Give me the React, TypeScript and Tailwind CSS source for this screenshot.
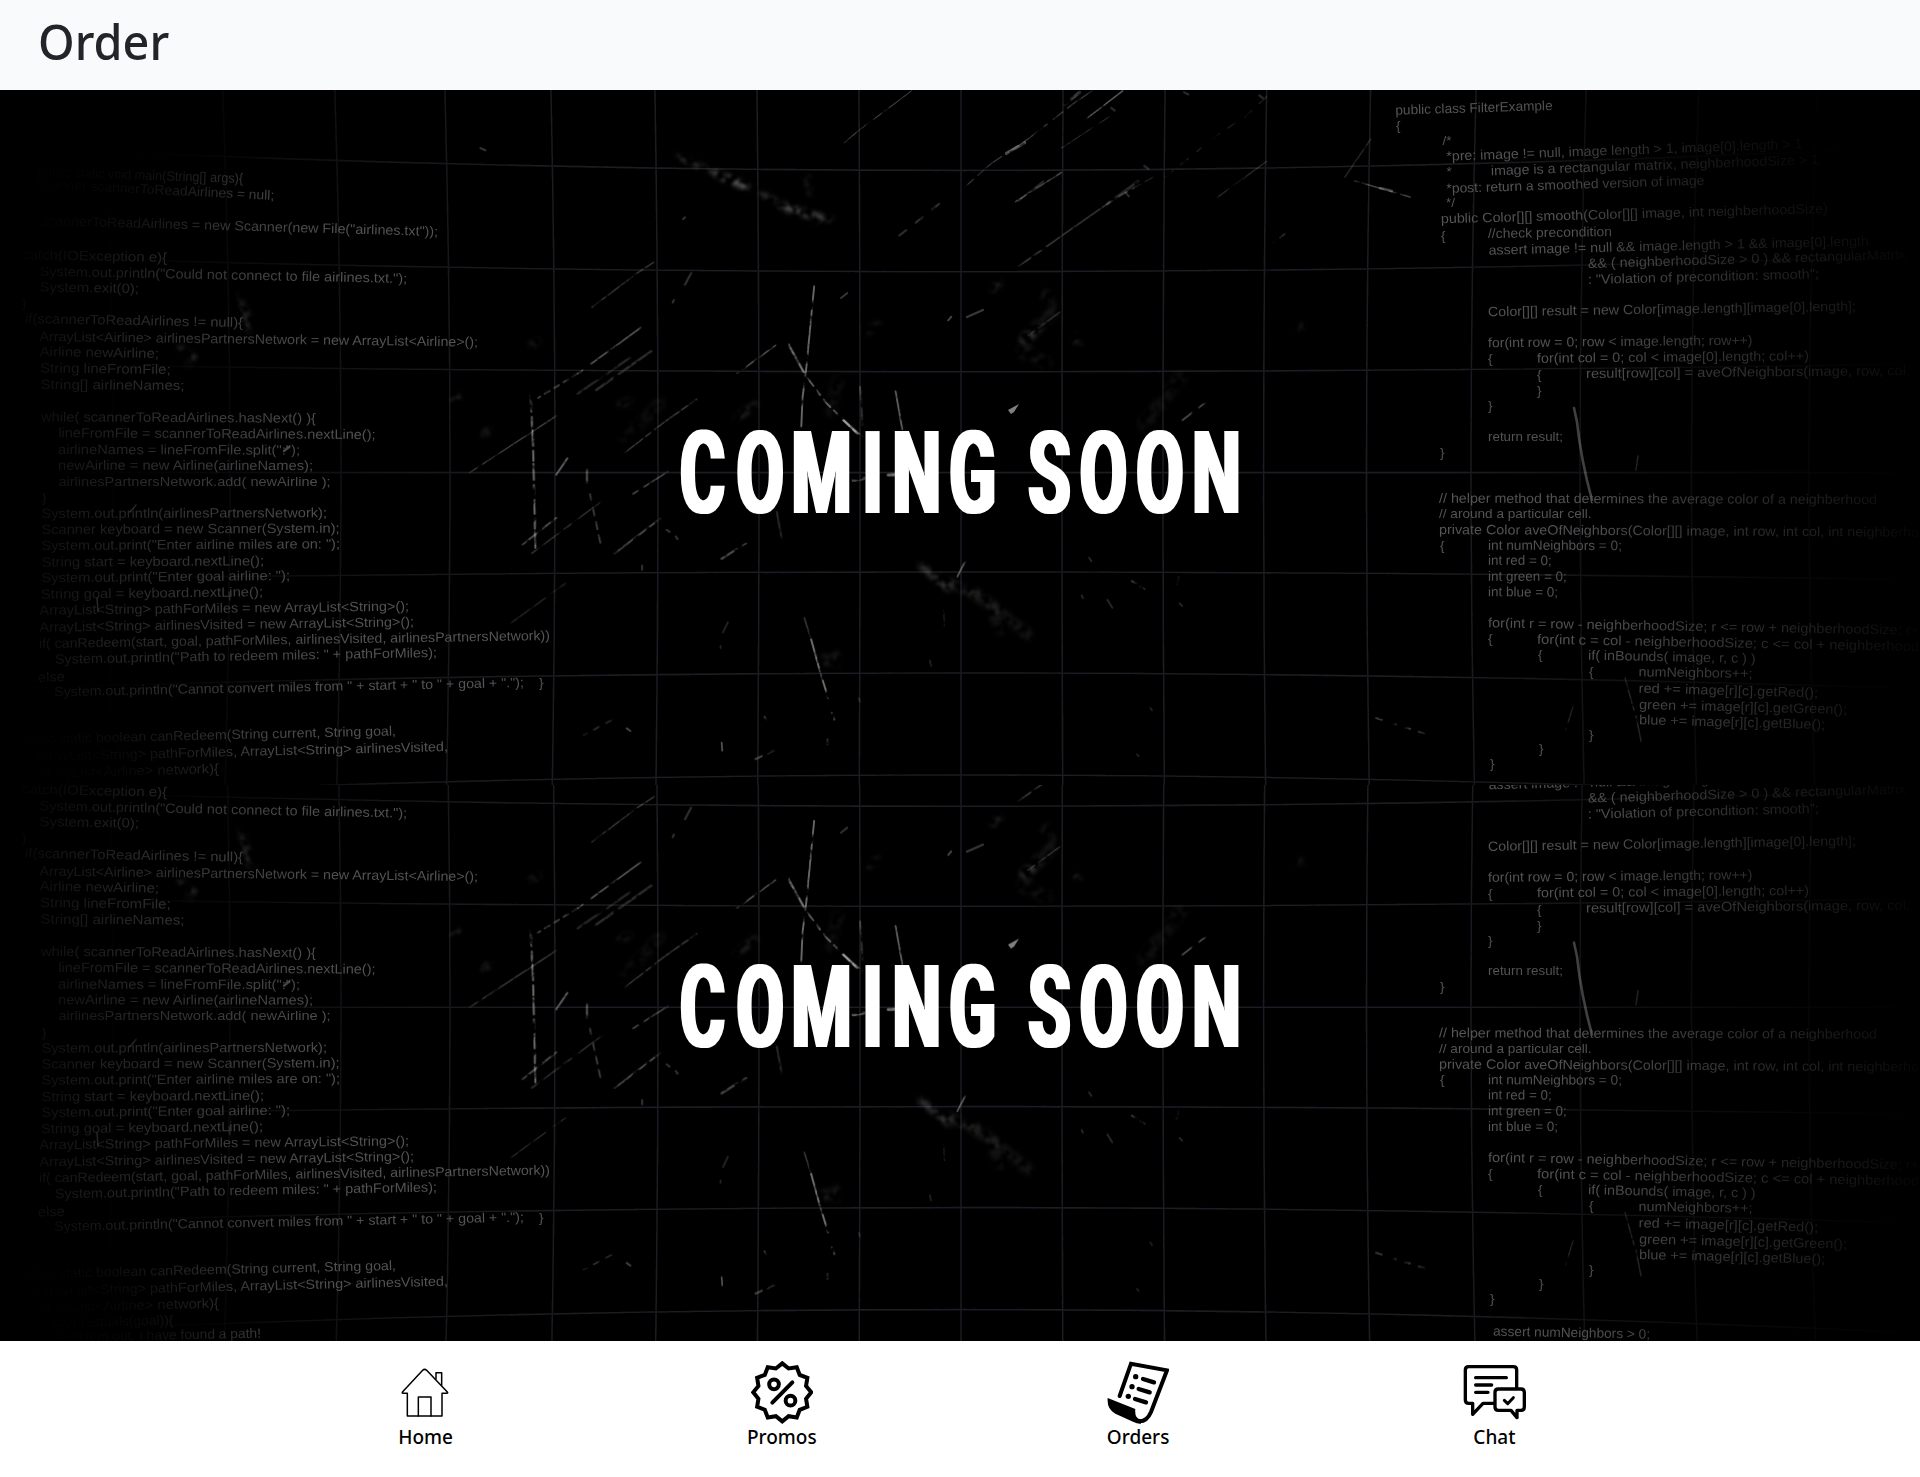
import React from "react";

// [text, start x, baseline y at start, end x, baseline y at end]
type CodeLine = [string, number, number, number?, number?];

const LEFT_CODE: CodeLine[] = [
  ["public static void main(String[] args){", 38, 176, 243, 183],
  ["Scanner scannerToReadAirlines = null;", 35, 188, 274, 200],
  ['scannerToReadAirlines = new Scanner(new File("airlines.txt"));', 41, 225, 438, 236],
  ["catch(IOException e){", 22, 259, 167, 262],
  ['System.out.println("Could not connect to file airlines.txt.");', 39.6, 275.7, 407, 283],
  ["System.exit(0);", 39.6, 291.5, 139, 293],
  ["}", 22, 307],
  ["if(scannerToReadAirlines != null){", 25, 323, 243, 327],
  ["ArrayList<Airline> airlinesPartnersNetwork = new ArrayList<Airline>();", 39.6, 341, 478, 346.5],
  ["Airline newAirline;", 39.6, 356, 159, 358],
  ["String lineFromFile;", 40, 372.5, 170.6, 374],
  ["String[] airlineNames;", 40.5, 389, 184.5, 390],
  ["while( scannerToReadAirlines.hasNext() ){", 41, 421.3, 316, 422.7],
  ["lineFromFile = scannerToReadAirlines.nextLine();", 58.4, 437.3, 375.5, 439],
  ['airlineNames = lineFromFile.split(":");', 58, 454, 300, 454.5],
  ["newAirline = new Airline(airlineNames);", 58, 469.7, 313, 470],
  ["airlinesPartnersNetwork.add( newAirline );", 58.4, 485.7, 330.6, 485.7],
  ["}", 42, 502],
  ["System.out.println(airlinesPartnersNetwork);", 41.6, 518, 327, 517.3],
  ["Scanner keyboard = new Scanner(System.in);", 41.6, 534, 339.6, 532.7],
  ['System.out.print("Enter airline miles are on: ");', 41.6, 550, 340, 548.3],
  ["String start = keyboard.nextLine();", 41.6, 566.7, 264, 565.3],
  ['System.out.print("Enter goal airline: ");', 41.6, 582.3, 290, 580],
  ["String goal = keyboard.nextLine();", 41, 598.7, 263, 596.3],
  ["ArrayList<String> pathForMiles = new ArrayList<String>();", 39.6, 614.7, 409, 610.7],
  ["ArrayList<String> airlinesVisited = new ArrayList<String>();", 39.6, 631.7, 414, 626.3],
  ["if( canRedeem(start, goal, pathForMiles, airlinesVisited, airlinesPartnersNetwork))", 39, 648, 550, 640],
  ['System.out.println("Path to redeem miles: " + pathForMiles);', 55, 663.7, 437, 657],
  ["else", 38, 682, 65, 681],
  ['System.out.println("Cannot convert miles from " + start + " to " + goal + ".");', 54.3, 696.3, 524, 687],
  ["}", 539, 687],
  ["public static boolean canRedeem(String current, String goal,", 18, 744, 396, 735.3],
  ["ArrayList<String> pathForMiles, ArrayList<String> airlinesVisited,", 35, 761, 448, 751],
  ["ArrayList<Airline> network){", 37, 778, 219, 773],
  ["if(current.equals(goal)){", 30, 793, 173.5, 790],
  ["//System.out. I have found a path!", 55, 807, 261, 803],
];

const RIGHT_CODE: CodeLine[] = [
  ["public class FilterExample", 1395.5, 114.7, 1552.7, 110],
  ["{", 1396, 130],
  ["/*", 1442.5, 145],
  ["*pre: image != null, image length > 1, image[0].length > 1", 1446.5, 160.7, 1802.5, 148.3],
  ["*", 1446.5, 176],
  ["image is a rectangular matrix, neighberhoodSize > 1", 1491, 175.3, 1819, 164],
  ["*post: return a smoothed version of image", 1446.5, 193, 1704.4, 184.7],
  ["*/", 1446, 207],
  ["public Color[][] smooth(Color[][] image, int neighberhoodSize)", 1441, 223.3, 1828, 213],
  ["{", 1441, 239.7],
  ["//check precondition", 1488, 238, 1612, 236],
  ["assert image != null && image.length > 1 && image[0].length", 1488.7, 254.7, 1869, 245.3],
  ["&& ( neighberhoodSize > 0 ) && rectangularMatrix", 1588, 268, 1906, 259],
  [': "Violation of precondition: smooth";', 1588, 284, 1819, 278.3],
  ["Color[][] result = new Color[image.length][image[0].length];", 1488, 316.3, 1856, 310.7],
  ["for(int row = 0; row < image.length; row++)", 1488, 347.3, 1752.5, 344.7],
  ["{", 1488, 363],
  ["for(int col = 0; col < image[0].length; col++)", 1537, 362.7, 1809, 360.3],
  ["{", 1537, 379],
  ["result[row][col] = aveOfNeighbors(image, row, col,", 1586, 378, 1910, 375],
  ["}", 1537, 395],
  ["}", 1488, 410],
  ["return result;", 1488, 440.7, 1563, 440.7],
  ["}", 1440, 456.7],
  ["// helper method that determines the average color of a neighberhood", 1439, 502.7, 1877, 504],
  ["// around a particular cell.", 1439, 518, 1591.6, 518],
  ["private Color aveOfNeighbors(Color[][] image, int row, int col, int neighberho", 1439, 534, 1919, 536.7],
  ["{", 1440, 549.7],
  ["int numNeighbors = 0;", 1488, 549.7, 1622, 550],
  ["int red = 0;", 1488, 564.7, 1551.6, 565],
  ["int green = 0;", 1488, 580.7, 1566.8, 581],
  ["int blue = 0;", 1488, 596.3, 1558, 596.5],
  ["for(int r = row - neighberhoodSize; r <= row + neighberhoodSize; r+", 1488, 627.3, 1919, 634.7],
  ["{", 1488, 643],
  ["for(int c = col - neighberhoodSize; c <= col + neighberhood", 1537, 643.7, 1919, 651],
  ["{", 1538, 659],
  ["if( inBounds( image, r, c ) )", 1588, 659.7, 1755.5, 663],
  ["{", 1589, 675.7],
  ["numNeighbors++;", 1638.6, 676.3, 1752.5, 678],
  ["red += image[r][c].getRed();", 1638.6, 692.7, 1818, 697.3],
  ["green += image[r][c].getGreen();", 1639, 709, 1847, 714],
  ["blue += image[r][c].getBlue();", 1639, 724.3, 1825, 729],
  ["}", 1589, 739.3],
  ["}", 1539, 753],
  ["}", 1490, 768],
  ["assert numNeighbors > 0;", 1493, 801, 1650, 804],
];

const GRID_X = [113, 230, 341, 450, 555, 658, 759, 860, 961, 1062, 1163, 1263.6, 1366.5, 1471, 1580, 1691.5, 1809];
const GRID_Y = [170.4, 271.7, 371.7, 472.6, 572, 673, 775];

// [path, brightness 0..1, stroke width, dash pattern]
type Mark = [string, number, number, string?];

const SCRATCHES: Mark[] = [
  ["M770 2L683 92L660 118", 0.24, 1.2],
  ["M1065 2L1035 30L960 110L900 165L855 220", 0.2, 1.4, "30 6 12 8"],
  ["M1115 2L1052 68", 0.34, 1.5],
  ["M1045 5L1020 32", 0.25, 3],
  ["M955 118L925 142", 0.3, 3],
  ["M1095 58L1015 130", 0.15, 1.2],
  ["M1015 185L940 250", 0.25, 1.7],
  ["M985 205L945 248", 0.16, 2],
  ["M1165 195L1100 245", 0.18, 1.5, "9 6"],
  ["M1100 245L1020 322L945 395", 0.27, 1.3],
  ["M1140 205L1090 255", 0.16, 3],
  ["M1350 15L1315 60L1270 100L1180 200", 0.12, 1.3, "10 10"],
  ["M1350 160L1270 240", 0.14, 1.5],
  ["M815 255L765 310L735 342", 0.2, 2, "9 12"],
  ["M350 385L320 412L248 487", 0.26, 1.3],
  ["M328 532L225 635", 0.36, 1.6],
  ["M225 635L160 690", 0.26, 1.8, "6 5"],
  ["M345 585L255 672", 0.18, 2.4],
  ["M310 600L225 680", 0.15, 2.4],
  ["M190 730L45 860", 0.25, 1.3],
  ["M410 410L400 436", 0.2, 2],
  ["M611 440L604 540L598 625L592 690L590 755", 0.4, 1.9],
  ["M548 572L485 635", 0.36, 1.5],
  ["M569 570L594 632", 0.45, 2.2],
  ["M600 645L630 700L683 772", 0.36, 2, "10 5 6 6"],
  ["M655 735L688 776", 0.42, 2.4],
  ["M744 675L755 760", 0.38, 1.8],
  ["M686 665L690 750", 0.22, 2],
  ["M148 685L152 800L156 1035", 0.42, 2, "16 5 10 3"],
  ["M240 850L240 880", 0.38, 1.8],
  ["M245 905L262 1015", 0.28, 1.6, "8 6"],
  ["M208 825L190 862", 0.4, 1.8],
  ["M420 692L370 740L302 812", 0.25, 1.4],
  ["M372 855L315 905", 0.3, 1.5],
  ["M190 958L135 1018", 0.3, 1.8],
  ["M265 920L150 1038", 0.2, 1.5],
  ["M360 960L285 1038", 0.3, 1.8],
  ["M500 1015L460 1050", 0.28, 2.2],
  ["M205 1105L115 1195", 0.16, 1.3],
  ["M550 945L558 1005", 0.2, 1.6],
  ["M1250 700L1212 740", 0.3, 1.6],
  ["M1380 322L1362 342", 0.2, 1.6],
  ["M1520 110L1478 195", 0.13, 1.6],
  ["M675 874L692 870M732 862L748 862", 0.46, 3],
  ["M858 1055L845 1090", 0.34, 1.8],
  ["M822 1165L824 1200", 0.18, 1.4],
  ["M1130 1100L1155 1122", 0.22, 2, "5 5"],
  ["M1206 1092L1203 1106", 0.24, 2],
  ["M595 1182L606 1230", 0.22, 1.6],
  ["M606 1230L620 1300L634 1362", 0.45, 1.9],
  ["M640 1395L644 1410M633 1455L633 1465", 0.3, 2],
  ["M530 1404L533 1410M545 1480L510 1502", 0.26, 2, "7 6"],
  ["M280 1412L235 1445", 0.2, 1.6, "6 8"],
  ["M1012 498L960 550", 0.2, 1.4],
];

const FLECKS: Mark[] = [
  ["M460 1462L461 1480", 0.3, 1.8],
  ["M305 1430L311 1436", 0.25, 2],
  ["M835 508L830 516", 0.26, 2],
  ["M665 455L655 466", 0.2, 2],
  ["M470 1192L462 1215M458 1245L458 1250", 0.15, 1.8],
  ["M800 1278L802 1290M684 1362L686 1370M1160 1384L1163 1390M1138 1488L1141 1492", 0.15, 1.6],
  ["M1060 1048L1064 1056M1090 1142L1098 1160M1048 1132L1050 1138M1208 1150L1212 1156", 0.16, 1.8],
  ["M66 130L74 135M400 285L397 289M382 470L380 476M330 1065L330 1075M370 985L375 990M385 1000L388 1006", 0.2, 2],
  ["M1215 5L1222 10M1338 12L1344 18M1096 40L1102 46M1150 170L1157 177M1120 230L1125 238", 0.18, 2],
];

const SMUDGES: Mark[] = [
  ["M390 150L440 180L500 215", 0.18, 5],
  ["M455 190L498 215", 0.22, 8],
  ["M525 232L560 258L640 290", 0.18, 5],
  ["M560 262L620 290", 0.2, 7],
  ["M600 195L604 230", 0.1, 6],
  ["M990 460L1000 500L960 550L950 585L990 610", 0.07, 12],
  ["M975 535L955 560", 0.12, 10],
  ["M915 430L903 446", 0.2, 5],
  ["M1035 555L1042 568", 0.12, 7],
  ["M715 525L700 540", 0.16, 5],
  ["M1210 640L1150 750", 0.05, 14],
  ["M1410 528L1395 536", 0.16, 4],
  ["M785 1065L830 1118", 0.2, 6],
  ["M820 1095L875 1130", 0.14, 8],
  ["M875 1130L960 1220", 0.07, 12],
  ["M900 1150L912 1210", 0.06, 12],
  ["M625 1268L650 1288M648 1262L628 1285", 0.12, 5],
  ["M515 705L485 735", 0.15, 6],
  ["M70 770L80 762M20 692L32 686M150 570L160 562M295 705L310 695", 0.17, 5],
  ["M360 700L300 790", 0.05, 12],
  ["M650 650L640 720", 0.05, 12],
];

function Marks({ items }: { items: Mark[] }) {
  return (
    <g transform="translate(440 90) scale(0.6123 0.4464)">
      {items.map(([d, o, w, dash], i) => (
        <path key={i} d={d} opacity={o} strokeWidth={w} strokeDasharray={dash} vectorEffect="non-scaling-stroke" />
      ))}
    </g>
  );
}

function Code({ lines, from, to }: { lines: CodeLine[]; from: number; to: number }) {
  return (
    <>
      {lines
        .filter(([, , y]) => y > from && y < to + 4)
        .map(([text, x, y, x2, y2], i) => {
          const dx = x2 === undefined ? 0 : x2 - x;
          const dy = y2 === undefined ? 0 : y2 - y;
          const angle = dx ? (Math.atan2(dy, dx) * 180) / Math.PI : 0;
          return (
            <text
              key={i}
              x={x}
              y={y}
              transform={`rotate(${angle} ${x} ${y})`}
              textLength={dx ? Math.hypot(dx, dy) : undefined}
              lengthAdjust="spacingAndGlyphs"
            >
              {text}
            </text>
          );
        })}
    </>
  );
}

function Scene({ id, top, height }: { id: string; top: number; height: number }) {
  const u = (n: string) => `url(#${id}-${n})`;
  const area = { x: 0, y: 80, width: 1920, height: 760 };
  return (
    <svg className="block w-full" height={height} viewBox={`0 ${top} 1920 ${height}`} preserveAspectRatio="none">
      <defs>
        <linearGradient id={`${id}-fl`} gradientUnits="userSpaceOnUse" x1="0" x2="560" y1="0" y2="0">
          <stop offset="0" stopColor="#fff" stopOpacity="0" />
          <stop offset="0.08" stopColor="#fff" stopOpacity="0.18" />
          <stop offset="0.3" stopColor="#fff" stopOpacity="0.56" />
          <stop offset="0.6" stopColor="#fff" stopOpacity="0.95" />
          <stop offset="1" stopColor="#fff" stopOpacity="1" />
        </linearGradient>
        <linearGradient id={`${id}-fr`} gradientUnits="userSpaceOnUse" x1="1400" x2="1920" y1="0" y2="0">
          <stop offset="0" stopColor="#fff" stopOpacity="1" />
          <stop offset="0.35" stopColor="#fff" stopOpacity="0.95" />
          <stop offset="0.6" stopColor="#fff" stopOpacity="0.62" />
          <stop offset="0.85" stopColor="#fff" stopOpacity="0.28" />
          <stop offset="1" stopColor="#fff" stopOpacity="0.06" />
        </linearGradient>
        <linearGradient id={`${id}-fg`} gradientUnits="userSpaceOnUse" x1="0" x2="1920" y1="0" y2="0">
          <stop offset="0" stopColor="#fff" stopOpacity="0" />
          <stop offset="0.08" stopColor="#fff" stopOpacity="0.12" />
          <stop offset="0.2" stopColor="#fff" stopOpacity="0.75" />
          <stop offset="0.3" stopColor="#fff" stopOpacity="1" />
          <stop offset="0.75" stopColor="#fff" stopOpacity="1" />
          <stop offset="0.9" stopColor="#fff" stopOpacity="0.35" />
          <stop offset="1" stopColor="#fff" stopOpacity="0" />
        </linearGradient>
        <radialGradient
          id={`${id}-cl`}
          gradientUnits="userSpaceOnUse"
          cx="0"
          cy="0"
          r="1"
          gradientTransform="translate(0 150) scale(280 160)"
        >
          <stop offset="0" stopColor="#000" stopOpacity="0.95" />
          <stop offset="0.5" stopColor="#000" stopOpacity="0.75" />
          <stop offset="1" stopColor="#000" stopOpacity="0" />
        </radialGradient>
        <radialGradient
          id={`${id}-cb`}
          gradientUnits="userSpaceOnUse"
          cx="0"
          cy="0"
          r="1"
          gradientTransform="translate(0 800) scale(280 140)"
        >
          <stop offset="0" stopColor="#000" stopOpacity="0.95" />
          <stop offset="0.5" stopColor="#000" stopOpacity="0.8" />
          <stop offset="1" stopColor="#000" stopOpacity="0" />
        </radialGradient>
        <radialGradient
          id={`${id}-cr`}
          gradientUnits="userSpaceOnUse"
          cx="0"
          cy="0"
          r="1"
          gradientTransform="translate(1860 140) scale(340 160)"
        >
          <stop offset="0" stopColor="#000" stopOpacity="0.85" />
          <stop offset="0.4" stopColor="#000" stopOpacity="0.6" />
          <stop offset="1" stopColor="#000" stopOpacity="0" />
        </radialGradient>
        {["l", "r", "g"].map((k) => (
          <mask key={k} id={`${id}-m${k}`} maskUnits="userSpaceOnUse" {...area}>
            <rect {...area} fill={u(`f${k}`)} />
            {k !== "r" && <rect {...area} fill={u("cl")} />}
            {k !== "r" && <rect {...area} fill={u("cb")} />}
            {k !== "l" && <rect {...area} fill={u("cr")} />}
          </mask>
        ))}
        <filter id={`${id}-soft`} filterUnits="userSpaceOnUse" {...area}>
          <feGaussianBlur stdDeviation="0.6" />
        </filter>
        <filter id={`${id}-worn`} filterUnits="userSpaceOnUse" {...area}>
          <feTurbulence type="fractalNoise" baseFrequency="0.11" numOctaves="3" seed="4" result="n" />
          <feColorMatrix in="n" type="matrix" values="0 0 0 0 1  0 0 0 0 1  0 0 0 0 1  4 0 0 0 -1.2" result="m" />
          <feComposite in="SourceGraphic" in2="m" operator="in" />
          <feGaussianBlur stdDeviation="0.65" />
        </filter>
        <filter id={`${id}-smudge`} filterUnits="userSpaceOnUse" {...area}>
          <feTurbulence type="fractalNoise" baseFrequency="0.12" numOctaves="3" seed="9" result="n" />
          <feColorMatrix in="n" type="matrix" values="0 0 0 0 1  0 0 0 0 1  0 0 0 0 1  4 0 0 0 -1.5" result="m" />
          <feGaussianBlur in="SourceGraphic" stdDeviation="2" result="b" />
          <feComposite in="b" in2="m" operator="in" />
          <feGaussianBlur stdDeviation="0.9" />
        </filter>
        <filter id={`${id}-bold`} filterUnits="userSpaceOnUse" x="640" y="400" width="640" height="150">
          <feMorphology operator="dilate" radius="2 0" />
          <feGaussianBlur stdDeviation="0.5" />
        </filter>
      </defs>
      <rect {...area} fill="#000" />

      <g mask={u("mg")}>
        <g fill="none" stroke="#1b1a20" strokeWidth="1.6" filter={u("soft")}>
          {GRID_X.map((x) => {
            const end = x + 0.01 * (x - 960);
            return <path key={x} d={`M${end} 90Q${2 * x - end} 472 ${end} 854`} />;
          })}
          {GRID_Y.map((y) => {
            const end = y + 0.078 * (y - 472);
            return <path key={y} d={`M0 ${end}Q960 ${2 * y - end} 1920 ${end}`} />;
          })}
        </g>
      </g>

      <g fill="none" stroke="#fff" strokeLinecap="round">
        <g filter={u("worn")}>
          <Marks items={SCRATCHES} />
          <path d="M1355 181L1410 197" opacity="0.25" strokeWidth="1.8" />
          <path d="M1376 718L1432 736" opacity="0.22" strokeWidth="2" strokeDasharray="6 9" />
          <path d="M1625 678L1634 710M1636 716L1641 741M1573 706L1566 730M1638 456L1636 470" opacity="0.14" strokeWidth="1.5" />
        </g>
        <g filter={u("soft")}>
          <Marks items={FLECKS} />
          <path d="M1019 404L1008 410L1011 414L1014 412Z" fill="#fff" stroke="none" opacity="0.5" />
          <path d="M983 310L967 317" opacity="0.22" strokeWidth="2.2" />
          <path d="M1574 408L1577 422Q1581 460 1592 500" opacity="0.25" strokeWidth="2.6" />
          <path d="M1380 188L1392 191" opacity="0.26" strokeWidth="2.4" />
          <path d="M97 598L98 612M229 592L230 600M136 505L130 512" opacity="0.14" strokeWidth="1.6" />
          <path d="M284 451L289 447" opacity="0.28" strokeWidth="2.4" />
        </g>
        <g filter={u("smudge")}>
          <Marks items={SMUDGES} />
          <path d="M241 297L245 312L249 330M244 308L250 322" opacity="0.16" strokeWidth="6" />
          <path d="M180 347L195 357M188 366L192 358" opacity="0.14" strokeWidth="5" />
        </g>
      </g>

      <g
        filter={u("soft")}
        className="whitespace-pre"
        fill="#565557"
        fontFamily='"Liberation Sans", Arial, sans-serif'
        fontSize="13.5"
      >
        <g mask={u("ml")}>
          <Code lines={LEFT_CODE} from={top} to={top + height} />
        </g>
        <g mask={u("mr")}>
          <Code lines={RIGHT_CODE} from={top} to={top + height} />
        </g>
      </g>

      <g filter={u("bold")}>
        <text
          transform="translate(0 512.7) scale(0.6 1)"
          x="1133.5 1227.5 1319 1437.7 1487.3 1582 1660 1713.7 1799.5 1893.6 1987"
          y="0"
          fill="#fff"
          fontFamily="Roboto, sans-serif"
          fontWeight="700"
          fontSize="114.5"
        >
          COMING SOON
        </text>
      </g>
    </svg>
  );
}

const badge = Array.from({ length: 24 }, (_, i) => {
  const r = i % 2 ? 74 : 87;
  const a = (i * Math.PI) / 12;
  return `${(93.75 + r * Math.sin(a)).toFixed(1)},${(94 - r * Math.cos(a)).toFixed(1)}`;
}).join(" ");

function Icon({ children, w }: { children: React.ReactNode; w: number }) {
  return (
    <svg
      className="block h-[62.5px] w-[62.5px]"
      viewBox="0 0 187.5 187.5"
      fill="none"
      stroke="#000"
      strokeWidth={w}
      strokeLinecap="round"
      strokeLinejoin="round"
    >
      {children}
    </svg>
  );
}

const ITEMS = [
  {
    label: "Home",
    icon: (
      <Icon w={4.5}>
        <path d="M40 97V165H144V97H158Q163 97 160 93L98 28Q92 22 86 28L26 92Q23 97 27 97Z" />
        <path d="M126 54V35H143V73M73 165V108H111V165" />
      </Icon>
    ),
  },
  {
    label: "Promos",
    icon: (
      <Icon w={12}>
        <polygon points={badge} strokeLinejoin="miter" />
        <circle cx="69" cy="70" r="14.5" />
        <circle cx="118.5" cy="119" r="14.5" />
        <path d="M64 125L124 64" />
      </Icon>
    ),
  },
  {
    label: "Orders",
    icon: (
      <Icon w={12}>
        <path d="M38 105L72 8L180 28L132 153Q120 181 98 181" strokeLinejoin="miter" />
        <path d="M2 111L85 144Q82 174 102 175V188Q92 189 78 182L25 158Q-1 144 2 111Z" fill="#000" stroke="none" />
        <path d="M108 54L141 64M95 84L128 94M84 114L117 124" strokeWidth="13" />
        <g fill="#000" stroke="none">
          <circle cx="86" cy="47" r="8" />
          <circle cx="75" cy="77" r="8" />
          <circle cx="64" cy="106" r="8" />
        </g>
      </Icon>
    ),
  },
  {
    label: "Chat",
    icon: (
      <Icon w={10}>
        <path d="M92 127H60L29 160V127H17Q7 127 7 117V27Q7 17 17 17H151Q161 17 161 27V80" />
        <path d="M106 84H174Q184 84 184 94V138Q184 148 174 148H162V170L144 148H106Q96 148 96 138V94Q96 84 106 84Z" />
        <path d="M38 50H130M38 72H86M38 94H75" />
        <path d="M124 118L134 128L151 110" strokeWidth="9" />
      </Icon>
    ),
  },
];

export default function App() {
  return (
    <div className="flex h-[1477px] w-full flex-col overflow-hidden bg-white font-['Noto_Sans','Open_Sans',sans-serif]">
      <header className="flex h-[90px] shrink-0 items-start bg-[#f8fafc] pl-[38px]">
        <h1 className="origin-left scale-x-[0.955] pt-[11px] text-[49px] leading-[60px] font-[550] text-[#212529]">Order</h1>
      </header>
      <main className="flex shrink-0 flex-col bg-black">
        <Scene id="a" top={90} height={695} />
        <Scene id="b" top={250.4} height={556} />
      </main>
      <nav className="flex flex-1 justify-center bg-white">
        <ul className="grid w-[1425px] grid-cols-4">
          {ITEMS.map(({ label, icon }) => (
            <li key={label} className="flex flex-col items-center pt-5 text-black">
              {icon}
              <span className="mt-px text-[19px] leading-[25px] font-medium">{label}</span>
            </li>
          ))}
        </ul>
      </nav>
    </div>
  );
}
